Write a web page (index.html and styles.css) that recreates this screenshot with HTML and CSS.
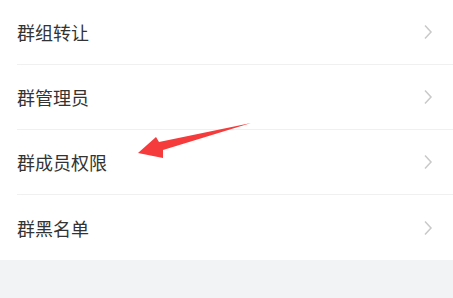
FILE: index.html
```html
<!DOCTYPE html>
<html lang="zh">
<head>
<meta charset="utf-8">
<link rel="stylesheet" href="styles.css">
</head>
<body>
<div class="page">
  <ul class="list">
    <li class="row"><span class="label">群组转让</span><svg class="chev" width="10" height="16" viewBox="0 0 10 16"><path d="M2 1.5 L8 8 L2 14.5" fill="none" stroke="#c9c9c9" stroke-width="1.5"/></svg></li>
    <li class="row"><span class="label">群管理员</span><svg class="chev" width="10" height="16" viewBox="0 0 10 16"><path d="M2 1.5 L8 8 L2 14.5" fill="none" stroke="#c9c9c9" stroke-width="1.5"/></svg></li>
    <li class="row"><span class="label">群成员权限</span><svg class="chev" width="10" height="16" viewBox="0 0 10 16"><path d="M2 1.5 L8 8 L2 14.5" fill="none" stroke="#c9c9c9" stroke-width="1.5"/></svg></li>
    <li class="row"><span class="label">群黑名单</span><svg class="chev" width="10" height="16" viewBox="0 0 10 16"><path d="M2 1.5 L8 8 L2 14.5" fill="none" stroke="#c9c9c9" stroke-width="1.5"/></svg></li>
  </ul>
  <div class="footer"></div>
  <svg class="arrow" width="453" height="298" viewBox="0 0 453 298"><polygon points="251,123 159,142 156,137 138,153 163,158 163,150" fill="#f53b3b"/></svg>
</div>
</body>
</html>
```
FILE: styles.css
```css
html, body {
  margin: 0;
  padding: 0;
  background: #ffffff;
}
.page {
  position: relative;
  width: 453px;
  height: 298px;
  overflow: hidden;
  font-family: "Noto Sans CJK SC", "Noto Sans", sans-serif;
}
.list {
  list-style: none;
  margin: 0;
  padding: 0 0 0 17px;
  background: #ffffff;
}
.row {
  height: 64px;
  display: flex;
  align-items: center;
  justify-content: space-between;
  padding-right: 20px;
  border-bottom: 1px solid #f0f0f0;
}
.row:last-child {
  height: 65px;
  border-bottom: none;
}
.label {
  font-size: 18px;
  color: #333333;
  line-height: 1;
}
.chev {
  display: block;
}
.footer {
  height: 38px;
  background: #f2f3f5;
}
.arrow {
  position: absolute;
  left: 0;
  top: 0;
}
```
